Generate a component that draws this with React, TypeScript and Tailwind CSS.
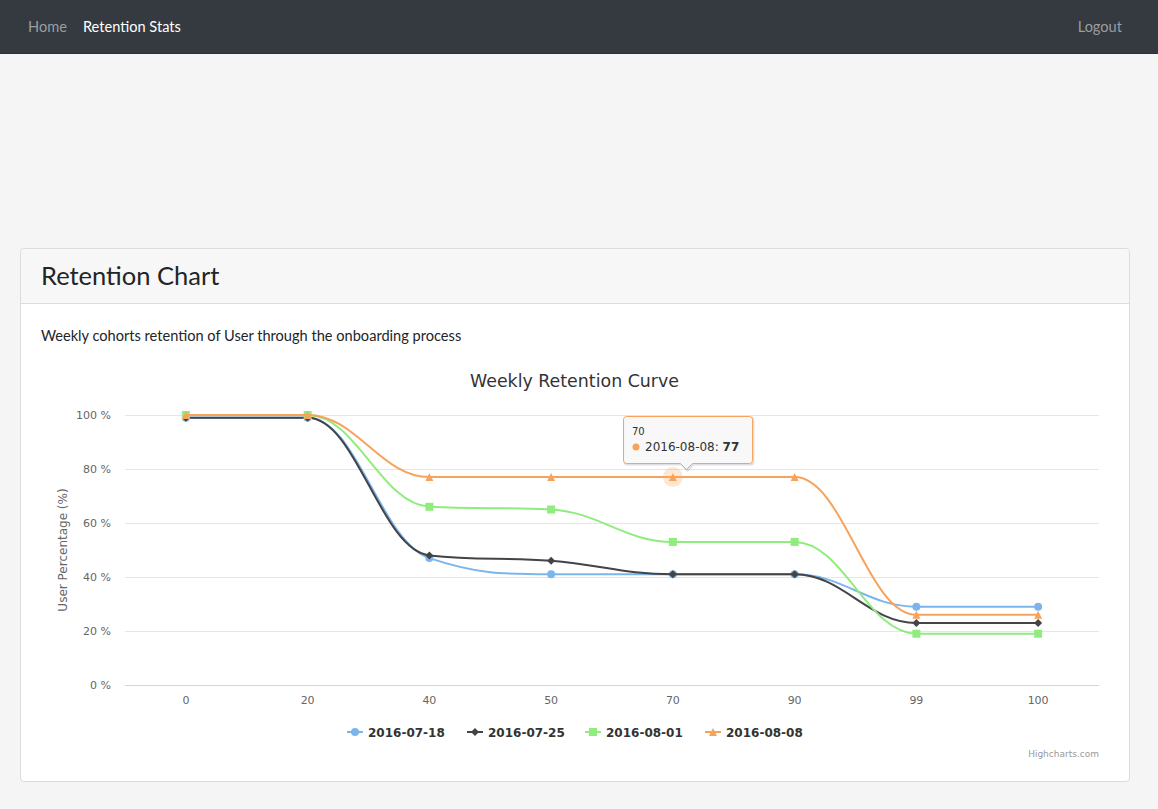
import React from "react";

type Series = {
  name: string;
  color: string;
  marker: "circle" | "diamond" | "square" | "triangle";
  data: number[];
};

const categories = ["0", "20", "40", "50", "70", "90", "99", "100"];

const series: Series[] = [
  { name: "2016-07-18", color: "#7cb5ec", marker: "circle", data: [99, 99, 47, 41, 41, 41, 29, 29] },
  { name: "2016-07-25", color: "#434348", marker: "diamond", data: [99, 99, 48, 46, 41, 41, 23, 23] },
  { name: "2016-08-01", color: "#90ed7d", marker: "square", data: [100, 100, 66, 65, 53, 53, 19, 19] },
  { name: "2016-08-08", color: "#f7a35c", marker: "triangle", data: [100, 100, 77, 77, 77, 77, 26, 26] },
];

const W = 1067;
const H = 400;
const PL = 84;
const PR = 1058;
const PT = 54;
const PB = 324;
const step = (PR - PL) / categories.length;
const chartFont = '"DejaVu Sans", Verdana, sans-serif';

const xPos = (i: number) => PL + (i + 0.5) * step;
const yPos = (v: number) => PB - (v / 100) * (PB - PT);

// highcharts style spline
function splinePath(values: number[]) {
  const pts = values.map((v, i) => ({ x: xPos(i), y: yPos(v) }));
  const ctrl = pts.map((p, i) => {
    const last = pts[i - 1];
    const next = pts[i + 1];
    if (!last || !next) return null;
    const s = 1.5;
    const d = s + 1;
    const lcx = (s * p.x + last.x) / d;
    let lcy = (s * p.y + last.y) / d;
    const rcx = (s * p.x + next.x) / d;
    let rcy = (s * p.y + next.y) / d;
    const corr = ((rcy - lcy) * (rcx - p.x)) / (rcx - lcx) + p.y - rcy;
    lcy += corr;
    rcy += corr;
    if (lcy > last.y && lcy > p.y) {
      lcy = Math.max(last.y, p.y);
      rcy = 2 * p.y - lcy;
    } else if (lcy < last.y && lcy < p.y) {
      lcy = Math.min(last.y, p.y);
      rcy = 2 * p.y - lcy;
    }
    if (rcy > next.y && rcy > p.y) {
      rcy = Math.max(next.y, p.y);
      lcy = 2 * p.y - rcy;
    } else if (rcy < next.y && rcy < p.y) {
      rcy = Math.min(next.y, p.y);
      lcy = 2 * p.y - rcy;
    }
    return { lcx, lcy, rcx, rcy };
  });
  let d = `M ${pts[0].x} ${pts[0].y}`;
  for (let i = 1; i < pts.length; i++) {
    const a = ctrl[i - 1];
    const b = ctrl[i];
    const p = pts[i];
    const prev = pts[i - 1];
    d += ` C ${a ? a.rcx : prev.x} ${a ? a.rcy : prev.y} ${b ? b.lcx : p.x} ${b ? b.lcy : p.y} ${p.x} ${p.y}`;
  }
  return d;
}

function Marker({ type, x, y, color, r = 4 }: { type: Series["marker"]; x: number; y: number; color: string; r?: number }) {
  if (type === "circle") return <circle cx={x} cy={y} r={r} fill={color} />;
  if (type === "square") return <rect x={x - r} y={y - r} width={r * 2} height={r * 2} fill={color} />;
  if (type === "diamond")
    return <path d={`M ${x} ${y - r} L ${x + r} ${y} L ${x} ${y + r} L ${x - r} ${y} Z`} fill={color} />;
  return <path d={`M ${x} ${y - r} L ${x + r} ${y + r} L ${x - r} ${y + r} Z`} fill={color} />;
}

function RetentionChart() {
  const legendX = [306, 426, 544, 664];
  const hoverX = xPos(4);
  const hoverY = yPos(77);

  return (
    <svg width={W} height={H} viewBox={`0 0 ${W} ${H}`} style={{ fontFamily: chartFont }} className="block">
      <text x={W / 2} y={26} textAnchor="middle" fontSize={17.4} fill="#333333">
        Weekly Retention Curve
      </text>

      {[0, 20, 40, 60, 80, 100].map((v) => (
        <g key={v}>
          {v > 0 && <line x1={PL} x2={PR} y1={yPos(v) + 0.5} y2={yPos(v) + 0.5} stroke="#e6e6e6" strokeWidth={1} />}
          <text x={70} y={yPos(v) + 4} textAnchor="end" fontSize={11} fill="#666666">
            {v} %
          </text>
        </g>
      ))}
      <line x1={PL} x2={PR} y1={PB + 0.5} y2={PB + 0.5} stroke="#ccd6eb" strokeWidth={1} />

      <text
        x={26}
        y={(PT + PB) / 2}
        transform={`rotate(-90 26 ${(PT + PB) / 2})`}
        textAnchor="middle"
        fontSize={12}
        fill="#666666"
      >
        User Percentage (%)
      </text>

      {categories.map((c, i) => (
        <text key={c} x={xPos(i)} y={343} textAnchor="middle" fontSize={11} fill="#666666">
          {c}
        </text>
      ))}

      <circle cx={hoverX} cy={hoverY} r={10} fill="#f7a35c" opacity={0.25} />

      {series.map((s) => (
        <g key={s.name}>
          <path d={splinePath(s.data)} fill="none" stroke={s.color} strokeWidth={2} strokeLinejoin="round" />
          {s.data.map((v, i) => (
            <Marker key={i} type={s.marker} x={xPos(i)} y={yPos(v)} color={s.color} />
          ))}
        </g>
      ))}

      {/* tooltip */}
      <g>
        <path
          d="M 586.5 56.5 L 709.5 56.5 Q 712.5 56.5 712.5 59.5 L 712.5 100.5 Q 712.5 103.5 709.5 103.5 L 652.5 103.5 L 646.5 109.5 L 640.5 103.5 L 586.5 103.5 Q 583.5 103.5 583.5 100.5 L 583.5 59.5 Q 583.5 56.5 586.5 56.5"
          fill="none"
          stroke="#000"
          strokeOpacity={0.12}
          strokeWidth={2}
        />
        <path
          d="M 585.5 55.5 L 708.5 55.5 Q 711.5 55.5 711.5 58.5 L 711.5 99.5 Q 711.5 102.5 708.5 102.5 L 651.5 102.5 L 645.5 108.5 L 639.5 102.5 L 585.5 102.5 Q 582.5 102.5 582.5 99.5 L 582.5 58.5 Q 582.5 55.5 585.5 55.5"
          fill="rgba(247,247,247,0.92)"
          stroke="#f7a35c"
          strokeWidth={1}
        />
        <text x={591} y={74} fontSize={10} fill="#333333">
          70
        </text>
        <circle cx={595} cy={86} r={3.5} fill="#f7a35c" />
        <text x={604} y={90} fontSize={12} fill="#333333">
          2016-08-08: <tspan fontWeight="bold">77</tspan>
        </text>
      </g>

      {series.map((s, i) => (
        <g key={s.name}>
          <line x1={legendX[i]} x2={legendX[i] + 16} y1={371} y2={371} stroke={s.color} strokeWidth={2} />
          <Marker type={s.marker} x={legendX[i] + 8} y={371} color={s.color} />
          <text x={legendX[i] + 21} y={375.5} fontSize={12} fontWeight="bold" fill="#333333">
            {s.name}
          </text>
        </g>
      ))}

      <text x={1058} y={396} textAnchor="end" fontSize={9} fill="#999999">
        Highcharts.com
      </text>
    </svg>
  );
}

export default function App() {
  return (
    <div className="min-h-screen bg-[#f5f5f5] font-['Lato','Noto_Sans',sans-serif] text-[#212529]">
      <nav className="h-[54px] bg-[#343a40] flex items-center justify-between px-[28px] text-[14.6px] border-b border-[#2e3338]">
        <div className="flex items-center gap-4">
          <a className="text-[#9a9da0]">Home</a>
          <a className="text-white">Retention Stats</a>
        </div>
        <a className="text-[#9a9da0] mr-[8px]">Logout</a>
      </nav>

      <main className="pt-[194px] px-[20px] pb-[27px]">
        <div className="bg-white border border-[#dcdcdc] rounded-[4px] w-[1110px]">
          <div className="h-[55px] bg-[#f7f7f7] border-b border-[#dcdcdc] rounded-t-[4px] px-[20px] flex items-center">
            <h2 className="text-[25.5px] leading-none">Retention Chart</h2>
          </div>
          <div className="p-[20px]">
            <p className="text-[14.6px] leading-[1.6] mb-[14px]">
              Weekly cohorts retention of User through the onboarding process
            </p>
            <RetentionChart />
          </div>
        </div>
      </main>
    </div>
  );
}
